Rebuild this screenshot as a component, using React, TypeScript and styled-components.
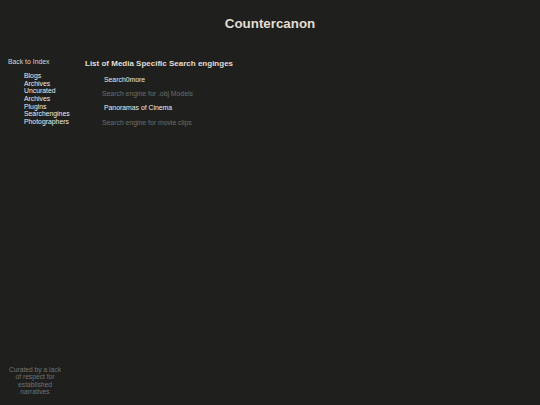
import React from "react";
import styled, { createGlobalStyle } from "styled-components";

const GlobalStyle = createGlobalStyle`
  html, body {
    margin: 0;
    padding: 0;
    background: #1f201e;
  }
  body {
    font-family: "Liberation Sans", Arial, sans-serif;
  }
  * { box-sizing: border-box; }
`;

const Page = styled.div`
  min-height: 100vh;
  display: flex;
  flex-direction: column;
  padding-bottom: 9px;
  background: #1f201e;
  font-family: "Liberation Sans", Arial, sans-serif;
`;

const Title = styled.h1`
  margin: 0;
  padding-top: 15.7px;
  font-size: 13.33px;
  line-height: 15.33px;
  font-weight: bold;
  text-align: center;
  color: #e2ded3;
`;

const Body = styled.div`
  flex: 1;
  display: flex;
  margin-top: 27.3px;
`;

const Sidebar = styled.aside`
  width: 54px;
  margin-left: 8px;
  display: flex;
  flex-direction: column;
  font-size: 6.85px;
  line-height: 7.67px;
`;

const BackLink = styled.a`
  display: block;
  color: #d6d6d2;
  text-decoration: none;
  white-space: nowrap;
`;

const NavList = styled.ul`
  list-style: none;
  margin: 6px 0 0;
  padding: 0 0 0 16px;
`;

const NavItem = styled.li`
  color: #ececea;
  white-space: nowrap;
`;

const Footer = styled.p`
  margin: auto 0 0;
  text-align: center;
  color: #737370;
  line-height: 7.6px;
  font-size: 6.7px;
`;

const Main = styled.main`
  margin-left: 23px;
  font-size: 6.85px;
  line-height: 7.67px;
`;

const Heading = styled.h3`
  margin: 1px 0 7px;
  font-size: 8px;
  line-height: 9.2px;
  font-weight: bold;
  color: #e2ded3;
`;

const Entry = styled.p<{ $kind: "link" | "desc" }>`
  margin: 6.67px 0;
  padding-left: ${(p) => (p.$kind === "link" ? "19px" : "17px")};
  color: ${(p) => (p.$kind === "link" ? "#ecebe6" : "#6d6d69")};
`;

const navItems = [
  "Blogs",
  "Archives",
  "Uncurated",
  "Archives",
  "Plugins",
  "Searchengines",
  "Photographers",
];

const engines = [
  { name: "Search0more", desc: "Search engine for .obj Models" },
  { name: "Panoramas of Cinema", desc: "Search engine for movie clips" },
];

export default function App() {
  return (
    <>
      <GlobalStyle />
      <Page>
        <Title>Countercanon</Title>
        <Body>
          <Sidebar>
            <BackLink href="#">Back to Index</BackLink>
            <NavList>
              {navItems.map((n, i) => (
                <NavItem key={i}>{n}</NavItem>
              ))}
            </NavList>
            <Footer>Curated by a lack of respect for established narratives</Footer>
          </Sidebar>
          <Main>
            <Heading>List of Media Specific Search enginges</Heading>
            {engines.map((e) => (
              <React.Fragment key={e.name}>
                <Entry $kind="link">{e.name}</Entry>
                <Entry $kind="desc">{e.desc}</Entry>
              </React.Fragment>
            ))}
          </Main>
        </Body>
      </Page>
    </>
  );
}
